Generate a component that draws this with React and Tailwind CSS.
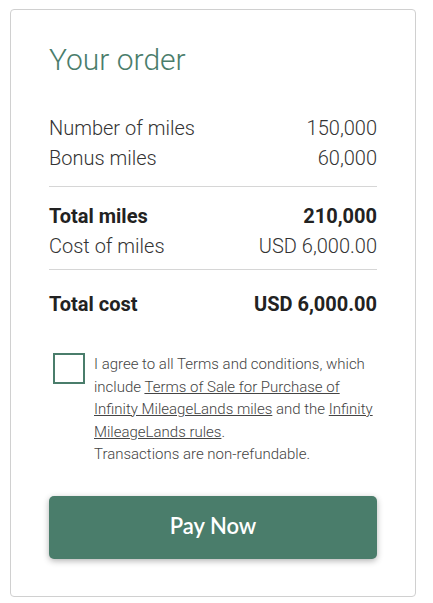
import React, { useState } from 'react';

const rows = [
    { label: 'Number of miles', value: '150,000' },
    { label: 'Bonus miles', value: '60,000' },
];

const Row = ({ label, value, bold }) => (
    <div className={`flex items-center justify-between h-[30px] text-[20px] ${bold ? 'font-bold text-[#222]' : 'font-light text-[#333]'}`}>
        <span>{label}</span>
        <span>{value}</span>
    </div>
);

const App = () => {
    const [agreed, setAgreed] = useState(false);

    return (
        <div className="w-[433px] h-[603px] bg-white pt-[9px] pl-[10px] font-['Roboto',sans-serif]">
            <div className="w-[406px] h-[588px] border border-[#d0d0d0] rounded-[4px] px-[38px] pt-[30px]">
                <h1 className="text-[30px] font-light text-[#4a7d6b] leading-[40px]">Your order</h1>

                <div className="mt-[33px] pb-[13px] border-b border-[#d6d6d6]">
                    {rows.map(r => <Row key={r.label} {...r} />)}
                </div>

                <div className="pt-[14px] pb-[8px] border-b border-[#d6d6d6]">
                    <Row label="Total miles" value="210,000" bold />
                    <Row label="Cost of miles" value="USD 6,000.00" />
                </div>

                <div className="pt-[19px]">
                    <Row label="Total cost" value="USD 6,000.00" bold />
                </div>

                <div className="flex mt-[34px] gap-[9px]">
                    <button
                        onClick={() => setAgreed(!agreed)}
                        className="shrink-0 ml-[4px] w-[32px] h-[31px] border-[2px] border-[#4a7d6b] bg-white flex items-center justify-center text-[#4a7d6b]"
                    >
                        {agreed && '✓'}
                    </button>
                    <p className="text-[15px] leading-[22.5px] font-light text-[#444]">
                        I agree to all Terms and conditions, which include <a className="underline">Terms of Sale for Purchase of Infinity MileageLands miles</a> and the <a className="underline">Infinity MileageLands rules</a>.
                        <br />
                        Transactions are non-refundable.
                    </p>
                </div>

                <button className="mt-[30px] w-full h-[63px] pb-[4px] rounded-[5px] bg-[#4a7d6b] text-white text-[22px] font-semibold font-['Lato',sans-serif] shadow-[0_2px_6px_rgba(0,0,0,0.3)]">
                    Pay Now
                </button>
            </div>
        </div>
    );
};

export default App;
